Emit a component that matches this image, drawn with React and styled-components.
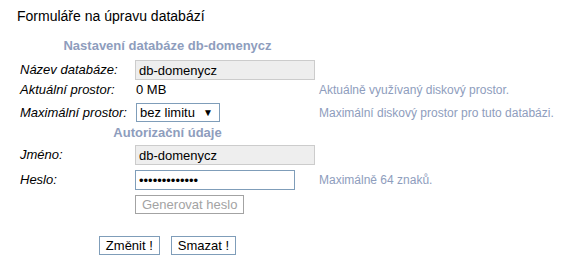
import React from 'react';
import styled, { createGlobalStyle } from 'styled-components';

const GlobalStyle = createGlobalStyle`
  body {
    margin: 0;
    background: #ffffff;
    font-family: "Liberation Sans", Arial, sans-serif;
    font-size: 13px;
    color: #000;
  }
`;

const Page = styled.div`
  padding: 8px 0 0 17px;
  width: 569px;
  height: 268px;
  box-sizing: border-box;
`;

const Title = styled.h1`
  margin: 0;
  font-size: 14px;
  font-weight: normal;
  line-height: 16px;
`;

const Form = styled.form`
  padding-left: 3px;
  margin-top: 14px;
`;

const Row = styled.div`
  display: grid;
  grid-template-columns: 111px 180px auto;
  column-gap: 4px;
  align-items: center;
  height: ${(p) => p.$h || 16}px;
  margin-top: ${(p) => p.$mt || 0}px;
`;

const Heading = styled.div`
  grid-column: 1 / 3;
  text-align: center;
  font-weight: bold;
  color: #8e9dbd;
  line-height: 16px;
`;

const Label = styled.label`
  font-style: italic;
  line-height: 16px;
`;

const Value = styled.span`
  padding-left: 1px;
  line-height: 16px;
`;

const Help = styled.span`
  font-size: 12px;
  color: #8e9dbd;
  line-height: 14px;
  white-space: nowrap;
`;

const TextInput = styled.input`
  box-sizing: border-box;
  width: ${(p) => p.$w || 180}px;
  height: 20px;
  margin: 0;
  padding: 0 0 0 3px;
  font: 13px "Liberation Sans", Arial, sans-serif;
  color: #000;
  background: ${(p) => (p.readOnly ? '#eeeeee' : '#ffffff')};
  border: 1px solid ${(p) => (p.readOnly ? '#cccccc' : '#7f9db9')};
  outline: none;
`;

const SelectBox = styled.div`
  display: inline-flex;
  align-items: center;
  justify-self: start;
  box-sizing: border-box;
  height: 19px;
  margin-left: 1px;
  border: 1px solid #7f9db9;
  padding: 0 6px 0 3px;
  gap: 8px;
`;

const Select = styled.select`
  appearance: none;
  border: none;
  padding: 0;
  margin: 0;
  background: transparent;
  font: 13px "Liberation Sans", Arial, sans-serif;
  color: #000;
  outline: none;
`;

const Arrow = styled.span`
  font-size: 10px;
  line-height: 1;
`;

const Button = styled.button`
  box-sizing: border-box;
  height: 19px;
  padding: 0 6px;
  margin: 0;
  font: 13px "Liberation Sans", Arial, sans-serif;
  line-height: 15px;
  color: ${(p) => (p.disabled ? '#a3a3a3' : '#000')};
  background: #ffffff;
  border: 1px solid ${(p) => (p.disabled ? '#a3a3a3' : '#7f9db9')};
  border-radius: 0;
  justify-self: start;
`;

const Actions = styled.div`
  grid-column: 1 / 3;
  display: flex;
  justify-content: center;
  gap: 11px;
`;

export default function App() {
  return (
    <Page>
      <GlobalStyle />
      <Title>Formuláře na úpravu databází</Title>
      <Form onSubmit={(e) => e.preventDefault()}>
        <Row>
          <Heading>Nastavení databáze db-domenycz</Heading>
        </Row>
        <Row $h={20} $mt={6}>
          <Label>Název databáze:</Label>
          <TextInput readOnly value="db-domenycz" />
        </Row>
        <Row $mt={2}>
          <Label>Aktuální prostor:</Label>
          <Value>0 MB</Value>
          <Help>Aktuálně využívaný diskový prostor.</Help>
        </Row>
        <Row $h={19} $mt={5}>
          <Label>Maximální prostor:</Label>
          <SelectBox>
            <Select defaultValue="0">
              <option value="0">bez limitu</option>
            </Select>
            <Arrow>▼</Arrow>
          </SelectBox>
          <Help>Maximální diskový prostor pro tuto databázi.</Help>
        </Row>
        <Row $mt={3}>
          <Heading>Autorizační údaje</Heading>
        </Row>
        <Row $h={20} $mt={4}>
          <Label>Jméno:</Label>
          <TextInput readOnly value="db-domenycz" />
        </Row>
        <Row $h={20} $mt={5}>
          <Label>Heslo:</Label>
          <TextInput type="password" $w={160} defaultValue="abcdefghijklm" />
          <Help>Maximálně 64 znaků.</Help>
        </Row>
        <Row $h={19} $mt={5}>
          <span />
          <Button type="button" disabled>Generovat heslo</Button>
        </Row>
        <Row $h={19} $mt={22}>
          <Actions>
            <Button type="submit">Změnit !</Button>
            <Button type="button">Smazat !</Button>
          </Actions>
        </Row>
      </Form>
    </Page>
  );
}
